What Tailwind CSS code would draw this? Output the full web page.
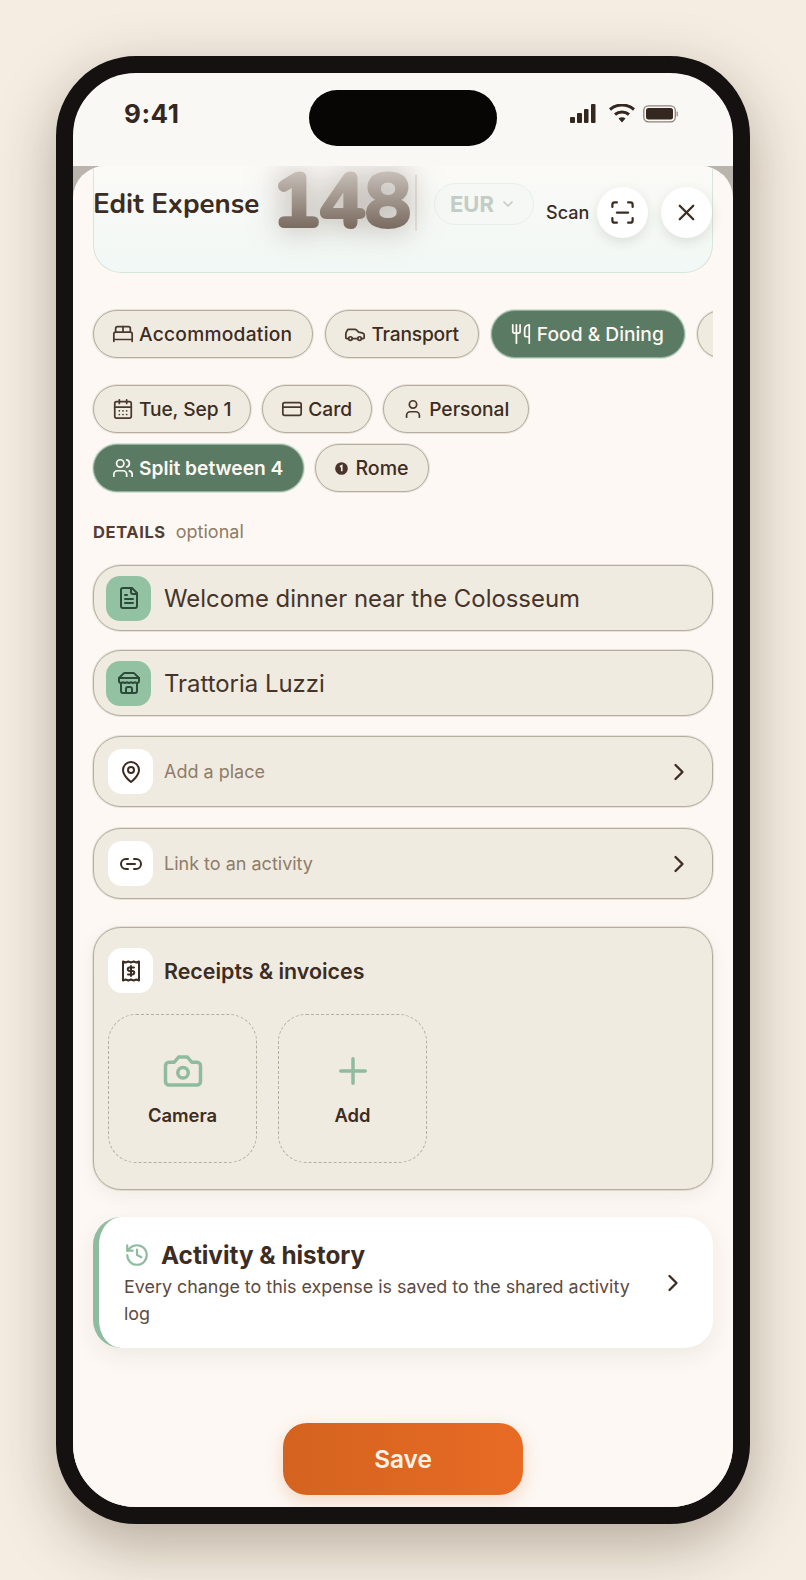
<!DOCTYPE html>
<html lang="en">
<head>
    <meta charset="UTF-8">
    <meta name="viewport" content="width=device-width, initial-scale=1.0">
    <title>Edit Expense</title>
    <script src="https://cdn.jsdelivr.net/npm/@tailwindcss/browser@4"></script>
</head>
<body class="bg-[#f5ede2] font-['Inter',sans-serif] text-[#3d2c22]">
    <div class="w-[806px] h-[1580px] pt-[56px] pl-[56px] overflow-hidden">
        <!-- Phone -->
        <div class="w-[694px] h-[1468px] border-[17px] border-[#141110] rounded-[80px] overflow-hidden flex flex-col bg-[#faf8f5] shadow-[0_20px_60px_rgba(60,40,20,0.34)] relative">
            <!-- Status bar -->
            <div class="h-[93px] shrink-0 flex items-center justify-between pl-[51px] pr-[54px] pb-[12px]">
                <span class="text-[26px] font-bold tracking-[0.5px] text-[#33271f]">9:41</span>
                <div class="flex items-center gap-[8px]">
                    <svg width="26" height="19" viewBox="0 0 26 19" fill="#33271f"><rect x="0" y="13" width="5" height="6" rx="1"/><rect x="7" y="9" width="5" height="10" rx="1"/><rect x="14" y="5" width="4.5" height="14" rx="1"/><rect x="21" y="0" width="4.5" height="19" rx="1"/></svg>
                    <svg width="26" height="19" viewBox="0 0 26 19" fill="none" stroke="#33271f" stroke-width="3" class="ml-[5px]"><path d="M1 5.500C8 -0.500 18 -0.500 25 5.500"/><path d="M6 10.500C10 7 16 7 20 10.500"/><path d="M13 18.500l-3.500-4c2-1.600 5-1.600 7 0z" fill="#33271f" stroke="none"/></svg>
                    <svg width="36" height="18" viewBox="0 0 36 18" fill="none"><rect x="0.800" y="0.800" width="31.500" height="16" rx="4.500" stroke="#8b817a" stroke-width="1.300"/><rect x="3" y="3" width="27" height="11.500" rx="2.500" fill="#33271f"/><rect x="33.500" y="6.500" width="1.500" height="5" rx="0.700" fill="#a8a09a"/></svg>
                </div>
            </div>
            <!-- Dynamic island -->
            <div class="absolute top-[17px] left-[236px] w-[188px] h-[56px] rounded-full bg-[#080604]"></div>

            <!-- Sheet -->
            <div class="flex-1 bg-[#b9b5ae] min-h-0">
                <div class="h-full rounded-t-[32px] overflow-hidden bg-[#fdf8f4] px-[20px] relative">
                    <!-- Amount card -->
                    <div class="h-[107px] rounded-b-[28px] border border-t-0 border-[#d5e6dc] bg-gradient-to-b from-[#fbfaf7] to-[#f1f8f5]"></div>

                    <!-- Header over the card -->
                    <div class="absolute top-0 left-[20px] right-[20px] h-[80px] flex items-start">
                        <h1 class="font-['Nunito','Lato',sans-serif] text-[27.7px] font-bold leading-[34px] mt-[21px] text-[#3d2c22] w-[179px] shrink-0 whitespace-nowrap">Edit Expense</h1>
                        <span class="font-['Nunito','Lato',sans-serif] font-black text-[80px] tracking-[-2px] leading-[72px] w-[143px] shrink-0 text-transparent bg-clip-text bg-gradient-to-b from-[#cfc9c2] to-[#6d5d53] [filter:blur(0.5px)_drop-shadow(0_0_14px_rgba(90,70,55,0.3))_drop-shadow(0_0_20px_rgba(90,70,55,0.15))]">148</span>
                        <span class="w-[2px] h-[56px] mt-[9px] bg-[#e8e4de] shrink-0"></span>
                        <div class="w-[100px] h-[42px] ml-[17px] mt-[17px] rounded-full border border-[#e6efe9] bg-[#f5f8f4] flex items-center pl-[15px] gap-[6px] shrink-0">
                            <span class="text-[22px] font-bold text-[#c4ccc5]">EUR</span>
                            <svg width="16" height="16" viewBox="0 0 24 24" fill="none" stroke="#c4ccc5" stroke-width="2.500" stroke-linecap="round" stroke-linejoin="round"><path d="m6 9 6 6 6-6"/></svg>
                        </div>
                        <span class="text-[18px] font-medium w-[43px] ml-[12px] mt-[33px] text-[#3d2c22]">Scan</span>
                        <button class="w-[51px] h-[51px] rounded-full bg-white ml-[8px] mt-[21px] flex items-center justify-center shrink-0 shadow-[0_4px_12px_rgba(60,40,20,0.12)]">
                            <svg width="27" height="27" viewBox="0 0 24 24" fill="none" stroke="#3d2c22" stroke-width="2" stroke-linecap="round" stroke-linejoin="round"><path d="M3 7V5a2 2 0 0 1 2-2h2"/><path d="M17 3h2a2 2 0 0 1 2 2v2"/><path d="M21 17v2a2 2 0 0 1-2 2h-2"/><path d="M7 21H5a2 2 0 0 1-2-2v-2"/><path d="M7 12h10"/></svg>
                        </button>
                        <button class="w-[51px] h-[51px] rounded-full bg-white ml-[13px] mt-[21px] flex items-center justify-center shrink-0 shadow-[0_4px_12px_rgba(60,40,20,0.12)]">
                            <svg width="27" height="27" viewBox="0 0 24 24" fill="none" stroke="#3d2c22" stroke-width="2" stroke-linecap="round" stroke-linejoin="round"><path d="M18 6 6 18"/><path d="m6 6 12 12"/></svg>
                        </button>
                    </div>

                    <!-- Category chips -->
                    <div class="flex gap-[12px] mt-[36px] mb-[-1px] py-[1px] pl-[1px] ml-[-1px] overflow-hidden">
                        <div class="h-[48px] pl-[18px] pr-[20px] shrink-0 rounded-full border border-[#b5ad9e] shadow-[0_0_0_1px_rgba(190,182,168,0.35)] bg-[#f0ebe1] flex items-center gap-[5px] text-[19.2px] font-medium tracking-[0.25px]">
                            <svg width="22" height="22" viewBox="0 0 24 24" fill="none" stroke="#4a382c" stroke-width="1.900" stroke-linecap="round" stroke-linejoin="round"><path d="M2 20v-8a2 2 0 0 1 2-2h16a2 2 0 0 1 2 2v8"/><path d="M4 10V6a2 2 0 0 1 2-2h12a2 2 0 0 1 2 2v4"/><path d="M12 4v6"/><path d="M2 18h20"/></svg>
                            <span class="pt-[1px]">Accommodation</span>
                        </div>
                        <div class="h-[48px] pl-[18px] pr-[19px] shrink-0 rounded-full border border-[#b5ad9e] shadow-[0_0_0_1px_rgba(190,182,168,0.35)] bg-[#f0ebe1] flex items-center gap-[5px] text-[19.2px] font-medium tracking-[-0.2px]">
                            <svg width="22" height="22" viewBox="0 0 24 24" fill="none" stroke="#4a382c" stroke-width="1.900" stroke-linecap="round" stroke-linejoin="round"><path d="M19 17h2c.6 0 1-.4 1-1v-3c0-.9-.7-1.700-1.500-1.900C18.700 10.600 16 10 16 10s-1.300-1.400-2.200-2.300c-.5-.4-1.100-.7-1.800-.7H5c-.6 0-1.100.4-1.400.9l-1.400 2.900A3.700 3.700 0 0 0 2 12v4c0 .6.4 1 1 1h2"/><circle cx="7" cy="17" r="2"/><path d="M9 17h6"/><circle cx="17" cy="17" r="2"/></svg>
                            <span class="pt-[1px]">Transport</span>
                        </div>
                        <div class="h-[48px] pl-[18px] pr-[20px] shrink-0 rounded-full border border-[#8fb39b] shadow-[0_0_0_1px_rgba(143,179,155,0.35)] bg-[#5a7a64] text-[#fdf8f2] flex items-center gap-[5px] text-[19.2px] font-medium">
                            <svg width="22" height="22" viewBox="0 0 24 24" fill="none" stroke="#fdf8f2" stroke-width="1.900" stroke-linecap="round" stroke-linejoin="round"><path d="M3 2v7c0 1.100.9 2 2 2h4a2 2 0 0 0 2-2V2"/><path d="M7 2v20"/><path d="M21 15V2a5 5 0 0 0-5 5v6c0 1.100.9 2 2 2h3Zm0 0v7"/></svg>
                            <span class="pt-[1px]">Food &amp; Dining</span>
                        </div>
                        <div class="h-[48px] w-[60px] shrink-0 rounded-full border border-[#b5ad9e] shadow-[0_0_0_1px_rgba(190,182,168,0.35)] bg-[#f0ebe1]"></div>
                    </div>

                    <!-- Meta chips -->
                    <div class="flex flex-wrap gap-x-[11px] gap-y-[11px] mt-[27px]">
                        <div class="h-[48px] pl-[18px] pr-[19px] rounded-full border border-[#b5ad9e] shadow-[0_0_0_1px_rgba(190,182,168,0.35)] bg-[#f0ebe1] flex items-center gap-[5px] text-[19.2px] font-medium tracking-[-0.1px]">
                            <svg width="22" height="22" viewBox="0 0 24 24" fill="none" stroke="#4a382c" stroke-width="1.900" stroke-linecap="round" stroke-linejoin="round"><path d="M8 2v4"/><path d="M16 2v4"/><rect width="18" height="18" x="3" y="4" rx="2"/><path d="M3 10h18"/><path d="M8 14h.01"/><path d="M12 14h.01"/><path d="M16 14h.01"/><path d="M8 18h.01"/><path d="M12 18h.01"/><path d="M16 18h.01"/></svg>
                            <span class="pt-[1px]">Tue, Sep 1</span>
                        </div>
                        <div class="h-[48px] pl-[18px] pr-[19px] rounded-full border border-[#b5ad9e] shadow-[0_0_0_1px_rgba(190,182,168,0.35)] bg-[#f0ebe1] flex items-center gap-[5px] text-[19.2px] font-medium">
                            <svg width="22" height="22" viewBox="0 0 24 24" fill="none" stroke="#4a382c" stroke-width="1.900" stroke-linecap="round" stroke-linejoin="round"><rect width="20" height="14" x="2" y="5" rx="2"/><path d="M2 10h20"/></svg>
                            <span class="pt-[1px]">Card</span>
                        </div>
                        <div class="h-[48px] pl-[18px] pr-[19px] rounded-full border border-[#b5ad9e] shadow-[0_0_0_1px_rgba(190,182,168,0.35)] bg-[#f0ebe1] flex items-center gap-[5px] text-[19.2px] font-medium">
                            <svg width="22" height="22" viewBox="0 0 24 24" fill="none" stroke="#4a382c" stroke-width="1.900" stroke-linecap="round" stroke-linejoin="round"><path d="M19 21v-2a4 4 0 0 0-4-4H9a4 4 0 0 0-4 4v2"/><circle cx="12" cy="7" r="4"/></svg>
                            <span class="pt-[1px]">Personal</span>
                        </div>
                        <div class="h-[48px] pl-[18px] pr-[20px] rounded-full border border-[#8fb39b] shadow-[0_0_0_1px_rgba(143,179,155,0.35)] bg-[#5a7a64] text-[#fdf8f2] flex items-center gap-[5px] text-[19.2px] font-semibold">
                            <svg width="22" height="22" viewBox="0 0 24 24" fill="none" stroke="#fdf8f2" stroke-width="1.900" stroke-linecap="round" stroke-linejoin="round"><path d="M16 21v-2a4 4 0 0 0-4-4H6a4 4 0 0 0-4 4v2"/><circle cx="9" cy="7" r="4"/><path d="M22 21v-2a4 4 0 0 0-3-3.870"/><path d="M16 3.130a4 4 0 0 1 0 7.750"/></svg>
                            <span class="pt-[1px]">Split between 4</span>
                        </div>
                        <div class="h-[48px] pl-[19px] pr-[19px] rounded-full border border-[#b5ad9e] shadow-[0_0_0_1px_rgba(190,182,168,0.35)] bg-[#f0ebe1] flex items-center gap-[7px] text-[19.6px] font-medium">
                            <svg width="13" height="13" viewBox="0 0 14 14"><circle cx="7" cy="7" r="6.800" fill="#4a322a"/><path d="M5.300 5.200 7.300 4v6" fill="none" stroke="#f0ebe1" stroke-width="1.800"/></svg>
                            <span class="pt-[1px]">Rome</span>
                        </div>
                    </div>

                    <!-- Details -->
                    <div class="flex items-baseline gap-[10px] mt-[28px] leading-[24px]">
                        <span class="text-[16.5px] font-bold tracking-[0.6px] text-[#523e33]">DETAILS</span>
                        <span class="text-[18px] text-[#8f7c68]">optional</span>
                    </div>

                    <div class="mt-[21px] h-[66px] rounded-[28px] border border-[#b5ad9e] shadow-[0_0_0_1px_rgba(190,182,168,0.35)] bg-[#f0ebe1] flex items-center pl-[12px] gap-[13px]">
                        <div class="w-[45px] h-[45px] rounded-[14px] bg-[#93c2a3] flex items-center justify-center">
                            <svg width="24" height="24" viewBox="0 0 24 24" fill="none" stroke="#2c4a38" stroke-width="2" stroke-linecap="round" stroke-linejoin="round"><path d="M15 2H6a2 2 0 0 0-2 2v16a2 2 0 0 0 2 2h12a2 2 0 0 0 2-2V7Z"/><path d="M14 2v4a2 2 0 0 0 2 2h4"/><path d="M10 9H8"/><path d="M16 13H8"/><path d="M16 17H8"/></svg>
                        </div>
                        <span class="text-[23.9px] text-[#463429] pt-[1px]">Welcome dinner near the Colosseum</span>
                    </div>
                    <div class="mt-[19px] h-[66px] rounded-[28px] border border-[#b5ad9e] shadow-[0_0_0_1px_rgba(190,182,168,0.35)] bg-[#f0ebe1] flex items-center pl-[12px] gap-[13px]">
                        <div class="w-[45px] h-[45px] rounded-[14px] bg-[#93c2a3] flex items-center justify-center">
                            <svg width="24" height="24" viewBox="0 0 24 24" fill="none" stroke="#2c4a38" stroke-width="2" stroke-linecap="round" stroke-linejoin="round"><path d="m2 7 4.410-4.410A2 2 0 0 1 7.830 2h8.340a2 2 0 0 1 1.420.59L22 7"/><path d="M4 12v8a2 2 0 0 0 2 2h12a2 2 0 0 0 2-2v-8"/><path d="M15 22v-4a2 2 0 0 0-2-2h-2a2 2 0 0 0-2 2v4"/><path d="M2 7h20"/><path d="M22 7v3a2 2 0 0 1-2 2 2.700 2.700 0 0 1-1.590-.63.7.7 0 0 0-.82 0A2.700 2.700 0 0 1 16 12a2.700 2.700 0 0 1-1.590-.63.7.7 0 0 0-.82 0A2.700 2.700 0 0 1 12 12a2.700 2.700 0 0 1-1.590-.63.7.7 0 0 0-.82 0A2.700 2.700 0 0 1 8 12a2.700 2.700 0 0 1-1.590-.63.7.7 0 0 0-.82 0A2.700 2.700 0 0 1 4 12a2 2 0 0 1-2-2V7"/></svg>
                        </div>
                        <span class="text-[23.9px] text-[#463429] pt-[1px]">Trattoria Luzzi</span>
                    </div>

                    <div class="mt-[20px] h-[71px] rounded-[28px] border border-[#b5ad9e] shadow-[0_0_0_1px_rgba(190,182,168,0.35)] bg-[#f0ebe1] flex items-center pl-[14px] pr-[19px] gap-[11px]">
                        <div class="w-[45px] h-[45px] rounded-[14px] bg-white flex items-center justify-center">
                            <svg width="24" height="24" viewBox="0 0 24 24" fill="none" stroke="#3d2c22" stroke-width="2" stroke-linecap="round" stroke-linejoin="round"><path d="M20 10c0 6-8 12-8 12s-8-6-8-12a8 8 0 0 1 16 0Z"/><circle cx="12" cy="10" r="3"/></svg>
                        </div>
                        <span class="flex-1 text-[18px] text-[#8f7c68]">Add a place</span>
                        <svg width="28" height="28" viewBox="0 0 24 24" fill="none" stroke="#3d2c22" stroke-width="2" stroke-linecap="round" stroke-linejoin="round"><path d="m9 18 6-6-6-6"/></svg>
                    </div>
                    <div class="mt-[21px] h-[71px] rounded-[28px] border border-[#b5ad9e] shadow-[0_0_0_1px_rgba(190,182,168,0.35)] bg-[#f0ebe1] flex items-center pl-[14px] pr-[19px] gap-[11px]">
                        <div class="w-[45px] h-[45px] rounded-[14px] bg-white flex items-center justify-center">
                            <svg width="24" height="24" viewBox="0 0 24 24" fill="none" stroke="#3d2c22" stroke-width="2" stroke-linecap="round" stroke-linejoin="round"><path d="M9 17H7A5 5 0 0 1 7 7h2"/><path d="M15 7h2a5 5 0 1 1 0 10h-2"/><path d="M8 12h8"/></svg>
                        </div>
                        <span class="flex-1 text-[18px] text-[#8f7c68]">Link to an activity</span>
                        <svg width="28" height="28" viewBox="0 0 24 24" fill="none" stroke="#3d2c22" stroke-width="2" stroke-linecap="round" stroke-linejoin="round"><path d="m9 18 6-6-6-6"/></svg>
                    </div>

                    <!-- Receipts -->
                    <div class="mt-[28px] h-[263px] rounded-[28px] border border-[#b5ad9e] shadow-[0_0_0_1px_rgba(190,182,168,0.35),0_6px_20px_rgba(60,40,20,0.06)] bg-[#f0ebe1] pl-[14px] pt-[20px]">
                        <div class="flex items-center gap-[11px]">
                            <div class="w-[45px] h-[45px] rounded-[14px] bg-white flex items-center justify-center">
                                <svg width="24" height="24" viewBox="0 0 24 24" fill="none" stroke="#3d2c22" stroke-width="2" stroke-linecap="round" stroke-linejoin="round"><path d="M4 2.500l2.670 1 2.670-1 2.660 1 2.670-1 2.670 1 2.660-1v19l-2.660-1-2.670 1-2.670-1-2.660 1-2.670-1-2.670 1z"/><path d="M15 8.500h-4.500a1.750 1.750 0 0 0 0 3.500h3a1.750 1.750 0 0 1 0 3.500H9"/><path d="M12 7v10"/></svg>
                            </div>
                            <span class="text-[21.4px] font-semibold pt-[1px]">Receipts &amp; invoices</span>
                        </div>
                        <div class="flex gap-[21px] mt-[21px]">
                            <div class="w-[149px] h-[149px] rounded-[28px] border border-dashed border-[#b5ae9f] flex flex-col items-center pt-[35px]">
                                <svg width="42" height="42" viewBox="0 0 24 24" fill="none" stroke="#8fbc9f" stroke-width="2" stroke-linecap="round" stroke-linejoin="round"><path d="M14.500 4h-5L7 7H4a2 2 0 0 0-2 2v9a2 2 0 0 0 2 2h16a2 2 0 0 0 2-2V9a2 2 0 0 0-2-2h-3l-2.500-3z"/><circle cx="12" cy="13" r="3"/></svg>
                                <span class="text-[18.4px] font-semibold mt-[10px]">Camera</span>
                            </div>
                            <div class="w-[149px] h-[149px] rounded-[28px] border border-dashed border-[#b5ae9f] flex flex-col items-center pt-[35px]">
                                <svg width="42" height="42" viewBox="0 0 24 24" fill="none" stroke="#8fbc9f" stroke-width="2" stroke-linecap="round" stroke-linejoin="round"><path d="M5 12h14"/><path d="M12 5v14"/></svg>
                                <span class="text-[18.4px] font-semibold mt-[10px]">Add</span>
                            </div>
                        </div>
                    </div>

                    <!-- Activity -->
                    <div class="mt-[27px] h-[131px] rounded-[28px] border-l-[6px] border-[#8fbc9f] bg-white flex items-center pl-[25px] pr-[24px] shadow-[0_8px_24px_rgba(60,40,20,0.07)]">
                        <div class="flex-1">
                            <div class="flex items-center gap-[11px]">
                                <svg width="26" height="26" viewBox="0 0 24 24" fill="none" stroke="#8fbc9f" stroke-width="2" stroke-linecap="round" stroke-linejoin="round"><path d="M3 12a9 9 0 1 0 9-9 9.750 9.750 0 0 0-6.740 2.740L3 8"/><path d="M3 3v5h5"/><path d="M12 7v5l4 2"/></svg>
                                <span class="text-[24.3px] font-bold leading-[34px]">Activity &amp; history</span>
                            </div>
                            <p class="mt-[1px] text-[17.9px] leading-[27px] text-[#5c4a40] w-[520px]">Every change to this expense is saved to the shared activity log</p>
                        </div>
                        <svg width="28" height="28" viewBox="0 0 24 24" fill="none" stroke="#3d2c22" stroke-width="2" stroke-linecap="round" stroke-linejoin="round" class="-translate-x-[2px]"><path d="m9 18 6-6-6-6"/></svg>
                    </div>

                    <!-- Save -->
                    <div class="flex justify-center mt-[75px]">
                        <button class="w-[240px] h-[72px] rounded-[24px] bg-gradient-to-r from-[#d4631f] to-[#e86b24] text-[#fdf3e7] text-[24.4px] font-semibold pt-[1px] shadow-[0_6px_18px_rgba(210,100,30,0.22)]">Save</button>
                    </div>
                </div>
            </div>
        </div>
    </div>
</body>
</html>
